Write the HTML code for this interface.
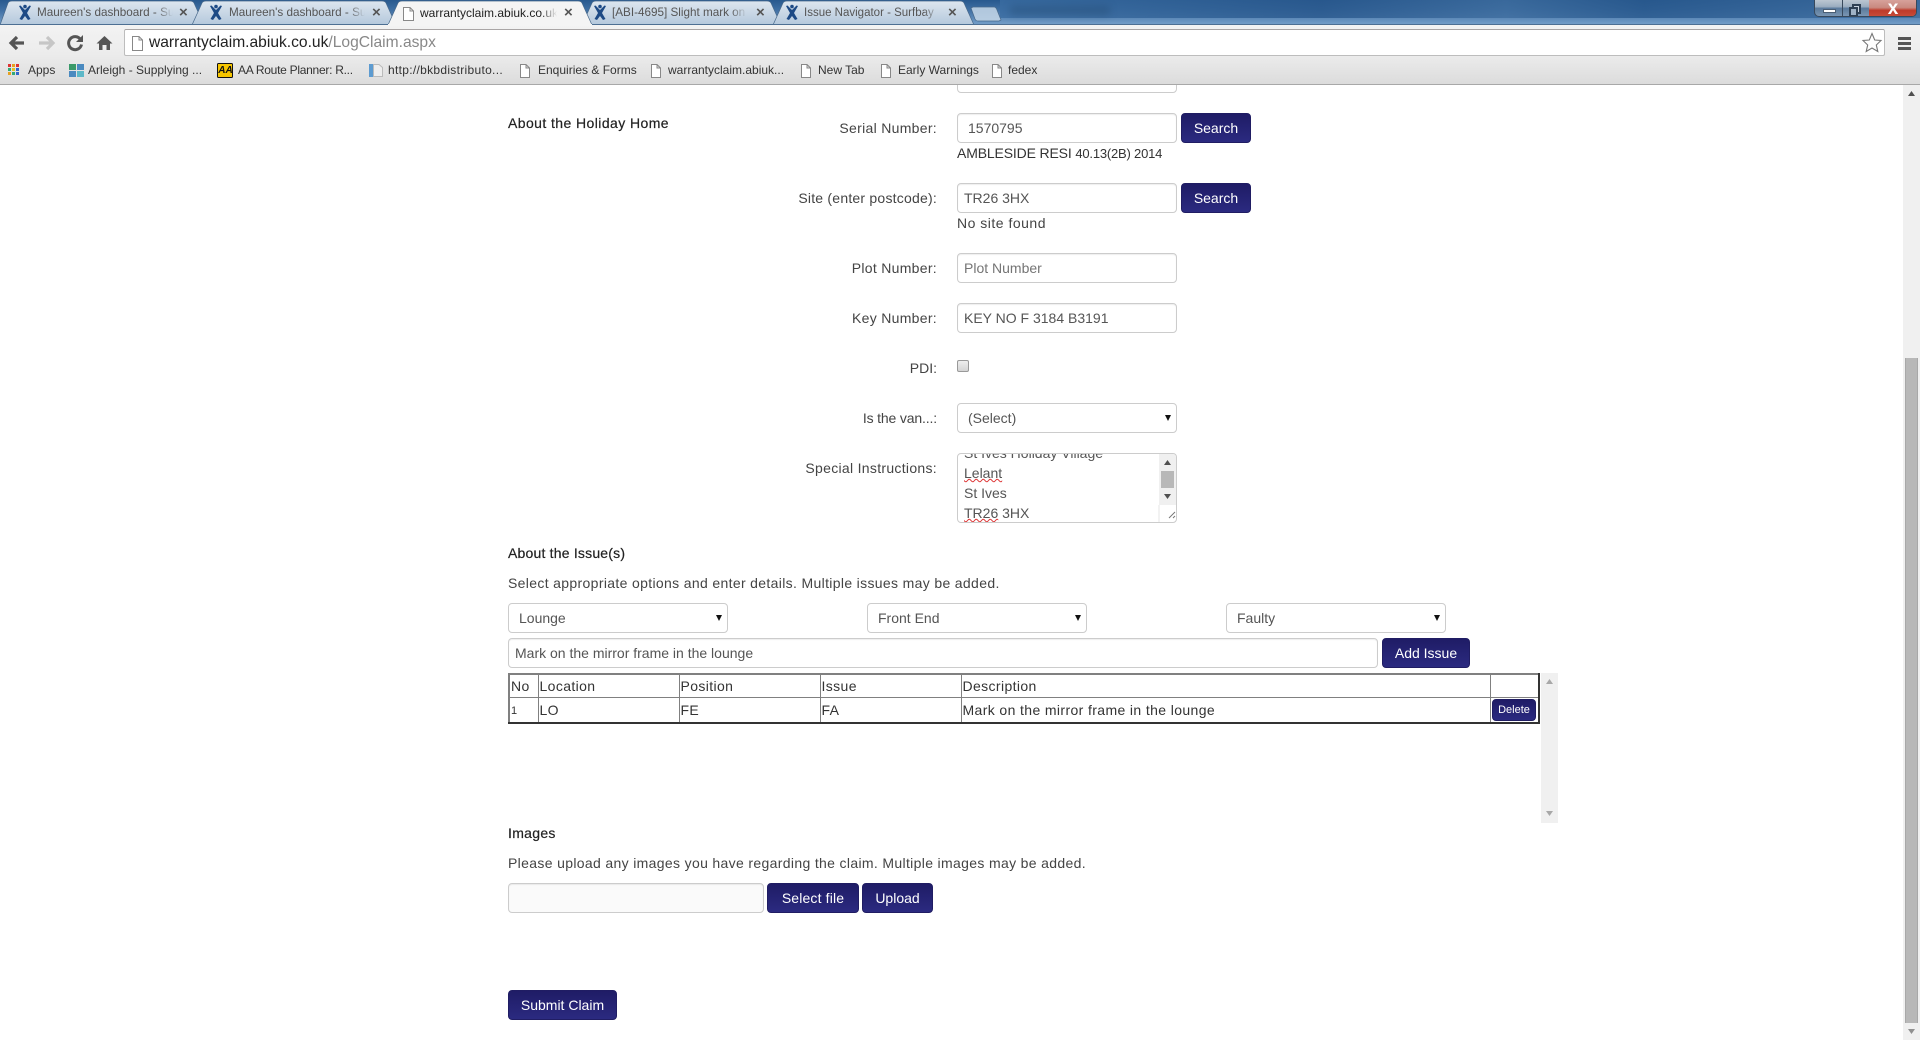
<!DOCTYPE html>
<html><head><meta charset="utf-8"><title>LogClaim</title>
<style>
html,body{margin:0;padding:0;width:1920px;height:1040px;overflow:hidden;background:#fff;font-family:"Liberation Sans",Arial,sans-serif}
.t{position:absolute;white-space:nowrap;line-height:20px;height:20px}
.l{right:983px;font-size:14px;color:#444;letter-spacing:.3px}
.h{font-size:14px;color:#222;letter-spacing:.42px;-webkit-text-stroke:.2px #222}
.p{font-size:14px;color:#444;letter-spacing:.34px}
input,.sel{position:absolute;box-sizing:border-box;height:30px;border:1px solid #ccc;border-radius:4px;background:#fff;font:14px "Liberation Sans",sans-serif;color:#555;margin:0;box-shadow:inset 0 1px 1px rgba(0,0,0,.07);outline:0}
input{padding:0 6px}
.sel{line-height:28px;padding-left:10px;box-shadow:none}
.sel:after{content:"";position:absolute;right:5px;top:11px;border-left:3.5px solid transparent;border-right:3.5px solid transparent;border-top:6px solid #111}
.b{position:absolute;box-sizing:border-box;height:30px;line-height:29px;text-align:center;color:#fff;font-size:14px;border-radius:4px;background:linear-gradient(#1f1c66,#2b2a80);border:1px solid #201d63}
.tb{position:absolute;font-size:11.7px;color:#555;white-space:nowrap;line-height:20px;top:3px;overflow:hidden;-webkit-mask-image:linear-gradient(90deg,#000 88%,transparent);mask-image:linear-gradient(90deg,#000 88%,transparent)}
.bm{position:absolute;top:60px;font-size:12px;color:#333;line-height:20px;white-space:nowrap}
.x{position:absolute;top:3px;font-size:15px;line-height:20px;color:#555;font-weight:bold}
.w{text-decoration:underline wavy #d33 1px;text-underline-offset:0}
svg{position:absolute;overflow:visible}
table{position:absolute;left:508px;top:673px;width:1032px;height:51px;border-collapse:collapse;table-layout:fixed;border-top:2px solid #808080;border-left:2px solid #808080;border-bottom:2px solid #333;border-right:2px solid #333;font-size:14px;color:#333}
td,th{border:1px solid #808080;padding:0 0 0 1px;font-weight:normal;text-align:left;letter-spacing:.38px;white-space:nowrap;overflow:hidden}
</style></head><body>

<!-- title bar -->
<div style="position:absolute;left:0;top:0;width:1920px;height:25px;background:linear-gradient(#28598e 0,#3f6fa3 40%,#76a0ca 100%)"></div>
<div style="position:absolute;left:1000px;top:0;width:920px;height:18px;background:linear-gradient(90deg,#3a6ca1,#28578c 35%,#3d6c9e 55%,#27578c 70%,#3e6d9f);opacity:.8"></div>
<div style="position:absolute;left:1010px;top:6px;width:100px;height:9px;background:#1f4468;filter:blur(4px);opacity:.35"></div>

<!-- tabs -->
<svg width="1010" height="25" style="left:0;top:0">
<defs>
<linearGradient id="g" x1="0" y1="0" x2="0" y2="1"><stop offset="0" stop-color="#dde6ef"/><stop offset="1" stop-color="#b4c8dc"/></linearGradient>
</defs>
<path d="M0 25L8 3Q9 1 12 1H190Q193 1 194 3L204 25Z" fill="url(#g)" stroke="#47688a" stroke-width=".7"/>
<path d="M192 25L202 3Q203 1 206 1H382Q385 1 386 3L396 25Z" fill="url(#g)" stroke="#47688a" stroke-width=".7"/>
<path d="M582 25L592 3Q593 1 596 1H767Q770 1 771 3L781 25Z" fill="url(#g)" stroke="#47688a" stroke-width=".7"/>
<path d="M773 25L783 3Q784 1 787 1H960Q963 1 964 3L974 25Z" fill="url(#g)" stroke="#47688a" stroke-width=".7"/>
<path d="M971 8L973 7H994Q996 7 997 10L1001 20L999 21H978Q976 21 975 19Z" fill="#c6d7e8" fill-opacity=".85" stroke="#47688a" stroke-width=".7"/>
<path d="M388 25L398 3Q399 1 402 1H578Q581 1 582 3L592 25Z" fill="#f4f4f4" stroke="#47688a" stroke-width=".7"/>
<g fill="#1d4a85">
<g id="ji"><circle cx="25" cy="6.500" r="1.800"/><path d="M19 6L20.500 5.500L25 10L29.500 5.500L31 6L27 13L30.500 19L28 20L25 16L22 20L19.500 19L23 13Z"/></g>
<use href="#ji" x="191"/><use href="#ji" x="575"/><use href="#ji" x="767"/>
</g>
<path d="M403.500 7.500H410L413.500 11V20.500H403.500ZM410 7.500V11H413.500" fill="#fff" stroke="#888"/>
</svg>
<div class="tb" style="left:37px;width:136px">Maureen's dashboard - Su</div><div class="x" style="left:179px">×</div>
<div class="tb" style="left:229px;width:136px">Maureen's dashboard - Su</div><div class="x" style="left:372px">×</div>
<div class="tb" style="left:420px;width:137px;color:#222;font-size:12px">warrantyclaim.abiuk.co.uk</div><div class="x" style="left:564px">×</div>
<div class="tb" style="left:612px;width:135px">[ABI-4695] Slight mark on</div><div class="x" style="left:756px">×</div>
<div class="tb" style="left:804px;width:136px;font-size:11.5px">Issue Navigator - Surfbay</div><div class="x" style="left:948px">×</div>

<!-- window controls -->
<div style="position:absolute;left:1814px;top:-2px;width:103px;height:19px;box-sizing:border-box;border:1px solid #38495c;border-radius:0 0 5px 5px;overflow:hidden;background:linear-gradient(#c0cad4,#9caec0 45%,#5a7a9c 55%,#7a96b3)">
<div style="position:absolute;left:27px;top:0;width:1px;height:19px;background:#38495c"></div>
<div style="position:absolute;left:54px;top:0;width:48px;height:19px;background:linear-gradient(#d8a49e,#c98a80 45%,#be3a2a 60%,#c9503e)"></div>
<div style="position:absolute;left:8px;top:10px;width:13px;height:4px;background:#fff;border:1px solid #4a5e74;box-sizing:border-box"></div>
<div style="position:absolute;left:37px;top:5px;width:9px;height:10px;border:2px solid #2e4054;background:#c6d2de;box-sizing:border-box"></div>
<div style="position:absolute;left:34px;top:8px;width:9px;height:10px;border:2px solid #2e4054;background:#9fb2c6;box-sizing:border-box"></div>
<div style="position:absolute;left:54px;top:0;width:48px;height:19px;line-height:20px;text-align:center;color:#fff;font-weight:bold;font-size:19px">x</div>
</div>

<!-- toolbar -->
<div style="position:absolute;left:0;top:24px;width:1920px;height:61px;box-sizing:border-box;background:linear-gradient(#f3f3f3,#ececec 50%,#dcdcdc);border-top:1px solid #4d6f93;border-bottom:1px solid #a8a8a8"></div>
<div style="position:absolute;left:388px;top:24px;width:204px;height:2px;background:#f4f4f4"></div>
<div style="position:absolute;left:124px;top:29px;width:1761px;height:27px;box-sizing:border-box;background:#fff;border:1px solid #bdbdbd;border-top-color:#a9a5a5;border-radius:2px"></div>
<svg width="140" height="30" style="left:0;top:28px" viewBox="0 28 140 30">
<path d="M24 43H12M17 37L11 43L17 49" fill="none" stroke="#555" stroke-width="3.200"/>
<path d="M39 43H52M47 37L53 43L47 49" fill="none" stroke="#c6c6c6" stroke-width="3.200"/>
<path d="M80.500 39.500A6.500 6.500 0 1 0 81.500 44.500" fill="none" stroke="#555" stroke-width="3"/>
<path d="M83 35V42H76Z" fill="#555"/>
<path d="M96.500 43.500L104.500 36L112.500 43.500H110V50H106.500V45H102.500V50H99V43.500Z" fill="#555"/>
<path d="M132.500 36.500H139L142.500 40V50.500H132.500ZM139 36.500V40H142.500" fill="#fff" stroke="#888"/>
</svg>
<div style="position:absolute;left:149px;top:33px;font-size:15.6px;line-height:20px;color:#222;white-space:nowrap">warrantyclaim.abiuk.co.uk<span style="color:#888">/LogClaim.aspx</span></div>
<svg width="30" height="24" style="left:1860px;top:31px" viewBox="1860 31 30 24"><path d="M1872 33.500L1874.700 40L1881 40.500L1876.300 45L1877.800 51.500L1872 48L1866.200 51.500L1867.700 45L1863 40.500L1869.300 40Z" fill="#fff" stroke="#777" stroke-width="1.100"/></svg>
<div style="position:absolute;left:1898px;top:37px;width:13px;height:3px;background:#555"></div>
<div style="position:absolute;left:1898px;top:42px;width:13px;height:3px;background:#555"></div>
<div style="position:absolute;left:1898px;top:47px;width:13px;height:3px;background:#555"></div>

<!-- bookmarks -->
<svg width="1010" height="20" style="left:0;top:60px" viewBox="0 60 1010 20">
<g id="ap"><rect x="8" y="64" width="3" height="3" fill="#d33"/><rect x="12" y="64" width="3" height="3" fill="#e8a020"/><rect x="16" y="64" width="3" height="3" fill="#d33"/><rect x="8" y="68" width="3" height="3" fill="#3a7"/><rect x="12" y="68" width="3" height="3" fill="#e8c020"/><rect x="16" y="68" width="3" height="3" fill="#36c"/><rect x="8" y="72" width="3" height="3" fill="#e8a020"/><rect x="12" y="72" width="3" height="3" fill="#3a7"/><rect x="16" y="72" width="3" height="3" fill="#36c"/></g>
<rect x="69" y="64" width="7" height="6" fill="#3a9a6a"/><rect x="77" y="64" width="7" height="6" fill="#4a8ac0"/><rect x="69" y="71" width="7" height="6" fill="#4a8ac0"/><rect x="77" y="71" width="7" height="6" fill="#5cb8c8"/>
<rect x="217.500" y="63.500" width="15" height="14" rx="1" fill="#f7c600" stroke="#111"/>
<rect x="369" y="64" width="4" height="13" fill="#5d9bd0"/>
<path d="M373.500 64.500H379L382.500 67.500V76.500H373.500Z" fill="#eee" stroke="#bbb"/>
<g fill="#fff" stroke="#888"><path id="dc" d="M520.500 64.500H526L529.500 68V77.500H520.500ZM526 64.500V68H529.500"/>
<use href="#dc" x="131"/><use href="#dc" x="281"/><use href="#dc" x="361"/><use href="#dc" x="472"/></g>
</svg>
<div style="position:absolute;left:218px;top:63px;width:15px;text-align:center;font:bold italic 10px/15px 'Liberation Sans',sans-serif;color:#111">AA</div>
<div class="bm" style="left:28px">Apps</div>
<div class="bm" style="left:88px">Arleigh - Supplying ...</div>
<div class="bm" style="left:238px;letter-spacing:-.27px">AA Route Planner: R...</div>
<div class="bm" style="left:388px;letter-spacing:.3px">http://bkbdistributo...</div>
<div class="bm" style="left:538px">Enquiries &amp; Forms</div>
<div class="bm" style="left:668px">warrantyclaim.abiuk...</div>
<div class="bm" style="left:818px">New Tab</div>
<div class="bm" style="left:898px">Early Warnings</div>
<div class="bm" style="left:1008px">fedex</div>

<!-- page scrollbar -->
<div style="position:absolute;left:1903px;top:85px;width:17px;height:955px;background:#f0f0f0"></div>
<div style="position:absolute;left:1905px;top:358px;width:13px;height:665px;background:#b8b8b8;border-left:1px solid #a8a8a8;border-right:1px solid #a8a8a8;box-sizing:border-box"></div>
<svg width="17" height="955" style="left:1903px;top:85px"><path d="M8.500 6L12 11H5Z" fill="#505050"/><path d="M5 944H12L8.500 949Z" fill="#909090"/></svg>

<!-- form -->
<div style="position:absolute;left:957px;top:63px;width:220px;height:30px;box-sizing:border-box;border:1px solid #ccc;border-radius:4px;clip-path:inset(22px -2px -2px -2px)"></div>

<div class="t h" style="left:508px;top:113px">About the Holiday Home</div>

<div class="t l" style="top:118px">Serial Number:</div>
<input style="left:957px;top:113px;width:220px;padding-left:10px" value="1570795">
<div class="b" style="left:1181px;top:113px;width:70px">Search</div>
<div class="t p" style="left:957px;top:143px;color:#333;letter-spacing:-.15px">AMBLESIDE RESI <span style="font-size:13px;letter-spacing:-.2px">40.13(2B) 2014</span></div>

<div class="t l" style="top:188px;letter-spacing:.22px">Site (enter postcode):</div>
<input style="left:957px;top:183px;width:220px" value="TR26 3HX">
<div class="b" style="left:1181px;top:183px;width:70px">Search</div>
<div class="t p" style="left:957px;top:213px;letter-spacing:.5px">No site found</div>

<div class="t l" style="top:258px">Plot Number:</div>
<input style="left:957px;top:253px;width:220px" placeholder="Plot Number">

<div class="t l" style="top:308px">Key Number:</div>
<input style="left:957px;top:303px;width:220px" value="KEY NO F 3184 B3191">

<div class="t l" style="top:358px;letter-spacing:0">PDI:</div>
<div style="position:absolute;left:957px;top:360px;width:12px;height:12px;box-sizing:border-box;border:1px solid #999;border-radius:2px;background:linear-gradient(#eee,#d4d4d4)"></div>

<div class="t l" style="top:408px;letter-spacing:-.15px">Is the van...:</div>
<div class="sel" style="left:957px;top:403px;width:220px">(Select)</div>

<div class="t l" style="top:458px">Special Instructions:</div>
<div style="position:absolute;left:957px;top:453px;width:220px;height:70px;box-sizing:border-box;border:1px solid #ccc;border-radius:4px;overflow:hidden;font-size:14px;line-height:20px;color:#555">
<div style="position:absolute;left:6px;top:-11px;white-space:nowrap">St Ives Holiday Village<br><span class="w">Lelant</span><br>St Ives<br><span class="w">TR26</span> 3HX</div>
<div style="position:absolute;right:0;top:0;width:17px;height:51px;background:#f0f0f0"></div>
<div style="position:absolute;right:2px;top:17px;width:13px;height:17px;background:#b8b8b8"></div>
<svg width="17" height="68" style="right:0;top:0"><path d="M8.500 6L12 11H5Z" fill="#505050"/><path d="M5 40H12L8.500 45Z" fill="#505050"/><path d="M16 58L10 64M16 62L14 64" stroke="#777" fill="none"/><path d="M0 51V68" stroke="#e6e6e6"/></svg>
</div>

<div class="t h" style="left:508px;top:543px;letter-spacing:.2px">About the Issue(s)</div>
<div class="t p" style="left:508px;top:573px">Select appropriate options and enter details. Multiple issues may be added.</div>
<div class="sel" style="left:508px;top:603px;width:220px">Lounge</div>
<div class="sel" style="left:867px;top:603px;width:220px">Front End</div>
<div class="sel" style="left:1226px;top:603px;width:220px">Faulty</div>
<input style="left:508px;top:638px;width:870px" value="Mark on the mirror frame in the lounge">
<div class="b" style="left:1382px;top:638px;width:88px">Add Issue</div>

<table>
<colgroup><col style="width:29px"><col style="width:141px"><col style="width:141px"><col style="width:141px"><col style="width:529px"><col style="width:49px"></colgroup>
<tr style="height:23px"><th>No</th><th>Location</th><th>Position</th><th>Issue</th><th>Description</th><th></th></tr>
<tr style="height:26px"><td style="font-size:11px;padding-top:3px">1</td><td>LO</td><td>FE</td><td>FA</td><td>Mark on the mirror frame in the lounge</td><td style="padding:0"></td></tr>
</table>
<div class="b" style="left:1492px;top:699px;width:44px;height:22px;line-height:21px;font-size:11px">Delete</div>
<div style="position:absolute;left:1541px;top:673px;width:17px;height:150px;background:#f0f0f0"></div>
<svg width="17" height="150" style="left:1541px;top:673px"><path d="M8.500 6L12 11H5Z" fill="#a8a8a8"/><path d="M5 138H12L8.500 143Z" fill="#a8a8a8"/></svg>

<div class="t h" style="left:508px;top:823px;letter-spacing:.3px">Images</div>
<div class="t p" style="left:508px;top:853px">Please upload any images you have regarding the claim. Multiple images may be added.</div>
<input style="left:508px;top:883px;width:256px;background:#fafafa">
<div class="b" style="left:767px;top:883px;width:92px;letter-spacing:.15px">Select file</div>
<div class="b" style="left:862px;top:883px;width:71px">Upload</div>
<div class="b" style="left:508px;top:990px;width:109px">Submit Claim</div>
</body></html>
